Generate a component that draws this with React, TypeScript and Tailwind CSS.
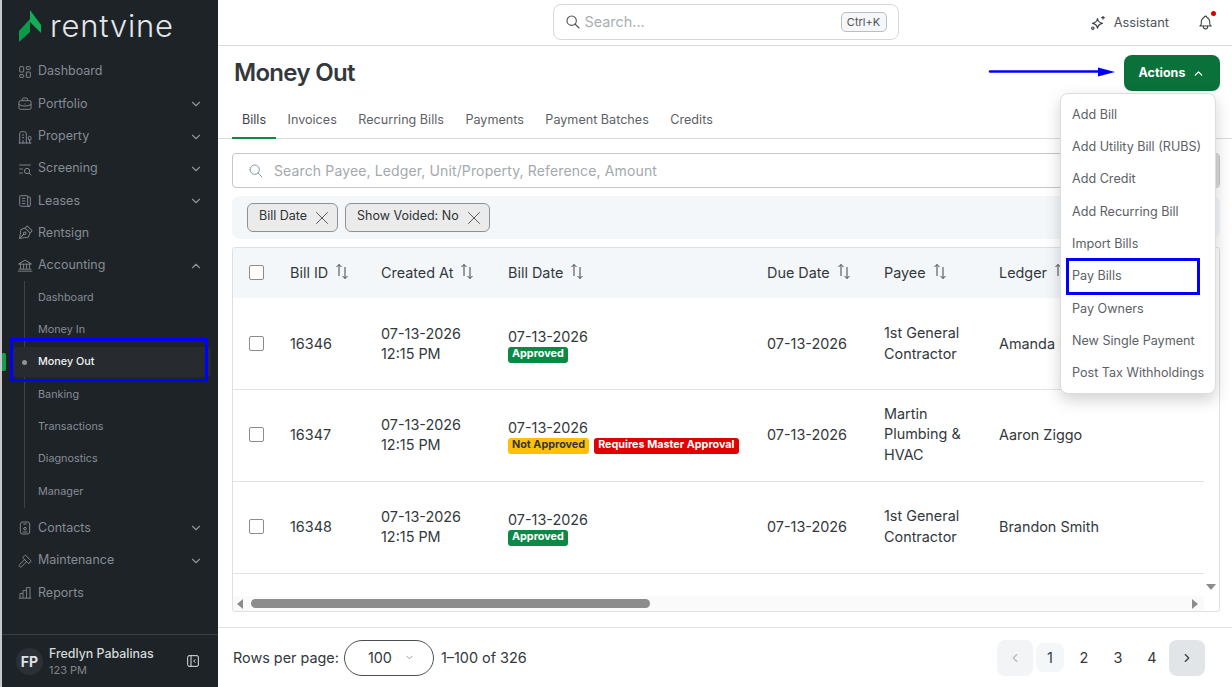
import React from 'react';
import {
  TbBell, TbBriefcase, TbBuildingEstate, TbChevronDown, TbChevronLeft, TbChevronRight, TbChevronUp,
  TbHammer, TbIdBadge, TbLayoutDashboard, TbLayoutSidebarLeftCollapse, TbListSearch, TbNews, TbSearch, TbX,
} from 'react-icons/tb';
import { PiBankLight, PiChartBarLight, PiPenNibLight } from 'react-icons/pi';

const NAV_TOP = [
  { label: 'Dashboard', icon: TbLayoutDashboard },
  { label: 'Portfolio', icon: TbBriefcase, chevron: 'down' },
  { label: 'Property', icon: TbBuildingEstate, chevron: 'down' },
  { label: 'Screening', icon: TbListSearch, chevron: 'down' },
  { label: 'Leases', icon: TbNews, chevron: 'down' },
  { label: 'Rentsign', icon: PiPenNibLight },
  { label: 'Accounting', icon: PiBankLight, chevron: 'up' },
];
const NAV_SUB = ['Dashboard', 'Money In', 'Money Out', 'Banking', 'Transactions', 'Diagnostics', 'Manager'];
const NAV_BOTTOM = [
  { label: 'Contacts', icon: TbIdBadge, chevron: 'down' },
  { label: 'Maintenance', icon: TbHammer, chevron: 'down' },
  { label: 'Reports', icon: PiChartBarLight },
];
const TABS = ['Bills', 'Invoices', 'Recurring Bills', 'Payments', 'Payment Batches', 'Credits'];
const MENU = ['Add Bill', 'Add Utility Bill (RUBS)', 'Add Credit', 'Add Recurring Bill', 'Import Bills', 'Pay Bills', 'Pay Owners', 'New Single Payment', 'Post Tax Withholdings'];
const COLS = 'grid grid-cols-[57px_91px_127px_259px_117px_115px_205px] items-center';

type NavItem = { label: string, icon: React.ComponentType<any>, chevron?: string };

const NavRow = ({ item }: { item: NavItem }) => {
  const Icon = item.icon;
  return (
    <div className="flex h-[32.33px] items-center px-[15px] text-[12.5px] text-[#858c94]">
      <Icon size={16} strokeWidth={1.3} className="text-[#8d9399]" />
      <span className="ml-[5px]">{item.label}</span>
      {item.chevron === 'down' && <TbChevronDown size={14} className="ml-auto text-[#8d9399]" />}
      {item.chevron === 'up' && <TbChevronUp size={14} className="ml-auto text-[#8d9399]" />}
    </div>
  );
};

const Sidebar = () => (
  <aside className="relative flex h-full w-[218px] shrink-0 flex-col border-l-2 border-[#c9c9c9] bg-[#1e2328]">
    <div className="flex h-[55.7px] items-start pl-[17px] pt-[10px]">
      <svg width="24" height="32" viewBox="0 0 24 32">
        <path d="M11 0 L22 15 L22 23 L11 12 Z" fill="#12ad55" />
        <path d="M0 21 L11 9 L11 22 L0 32 Z" fill="#0c9a4b" />
      </svg>
      <span className="ml-[7px] text-[31px] font-light leading-[32px] tracking-[0.8px] text-[#e4e6e8]">rentvine</span>
    </div>
    <nav>
      {NAV_TOP.map((item) => <NavRow key={item.label} item={item} />)}
      <div className="mb-[4.5px] ml-[22px] mt-[-0.5px] border-l border-[#3d4349]">
        {NAV_SUB.map((label) => (
          label === 'Money Out' ? (
            <div key={label} className="my-px -ml-[12px] mr-[7px] flex h-[30.33px] items-center rounded-[3px] bg-[#272b30] pl-[9px] text-[10.8px] font-medium text-[#eef0f2]">
              <span className="h-[5px] w-[5px] rounded-full bg-[#8d9399]" />
              <span className="ml-[11px]">{label}</span>
            </div>
          ) : (
            <div key={label} className="flex h-[32.33px] items-center pl-[13px] text-[10.8px] text-[#858c94]">{label}</div>
          )
        ))}
      </div>
      {NAV_BOTTOM.map((item) => <NavRow key={item.label} item={item} />)}
    </nav>
    <div className="mt-auto flex h-[53px] items-center border-t border-[#3a3f45] pl-[14px] pr-[17px]">
      <div className="flex h-[27px] w-[27px] items-center justify-center rounded-full bg-[#2b3036] text-[14px] font-bold text-[#dfe2e4]">FP</div>
      <div className="ml-[6px] mt-[1px]">
        <div className="text-[12.4px] font-medium leading-[16px] text-[#d5d8da]">Fredlyn Pabalinas</div>
        <div className="mt-[1px] text-[11px] leading-[14px] text-[#7f8589]">123 PM</div>
      </div>
      <TbLayoutSidebarLeftCollapse size={16} strokeWidth={1.5} className="ml-auto text-[#dfe2e4]" />
    </div>
    <div className="absolute left-0 top-[353px] h-[18px] w-[4px] rounded-r-[2px] bg-[#12a150]" />
  </aside>
);

const TopBar = () => (
  <header className="relative flex h-[46px] shrink-0 items-center justify-center border-b border-[#d9dcde]">
    <div className="ml-[1px] mt-[-1px] flex h-[36px] w-[346px] items-center rounded-lg border border-[#d5d9dc] pl-[11px] pr-[11px]">
      <TbSearch size={16} strokeWidth={1.7} className="text-[#4c5256]" />
      <span className="ml-[4px] text-[14.4px] text-[#a9afb3]">Search...</span>
      <span className="ml-auto flex h-[20px] w-[46px] items-center justify-center rounded-[5px] border border-[#b9bec2] bg-[#f6f7f8] text-[11px] text-[#4c5256]">Ctrl+K</span>
    </div>
    <div className="absolute right-[63px] top-[13px] flex items-center text-[12.8px] text-[#4c5256]">
      <svg width="16" height="16" viewBox="0 0 16 16" fill="none" stroke="#3c4145" strokeWidth="1.2" strokeLinejoin="round">
        <path d="M7.5 3.5C8 6.5 9.5 7.8 12.5 8.3C9.5 8.8 8 10.2 7.5 13.2C7 10.2 5.5 8.8 2.5 8.3C5.5 7.8 7 6.5 7.5 3.5Z" />
        <path d="M13 1V4.5M11.2 2.7H14.8" />
        <circle cx="2.8" cy="13.2" r="1.2" />
      </svg>
      <span className="ml-[8px]">Assistant</span>
    </div>
    <div className="absolute right-[18px] top-[14px]">
      <TbBell size={17} strokeWidth={1.5} className="text-[#3c4145]" />
      <span className="absolute right-[-2px] top-[-3px] h-[5px] w-[5px] rounded-full bg-[#d40000]" />
    </div>
  </header>
);

const SortIcon = () => (
  <svg width="14" height="17" viewBox="0 0 14 17" fill="none" stroke="#3e4347" strokeWidth="1" className="ml-[7px] mt-[-1px]">
    <path d="M4 13V1.5M1.5 4L4 1.5L6.5 4M10 4V15.5M7.5 13L10 15.5L12.5 13" />
  </svg>
);

const Badge = ({ color, children }: { color: string, children: React.ReactNode }) => (
  <span className={`${color} inline-flex h-[16px] items-center rounded-[3px] px-[4px] text-[10.8px] font-bold leading-none`}>{children}</span>
);

const Check = () => <span className="ml-[16px] block h-[15px] w-[15px] rounded-[2px] border border-[#8c8c8c] bg-white" />;

const Row = ({ id, payee, ledger, badges, lifted }: { id: string, payee: string[], ledger: string, badges: React.ReactNode, lifted?: boolean }) => (
  <div className={`${COLS} ${lifted ? 'pb-[2px]' : ''} h-[92px] w-[971px] border-b border-[#e2e3e4]`}>
    <Check />
    <div>{id}</div>
    <div className="leading-[20px]">
      <div>07-13-2026</div>
      <div>12:15 PM</div>
    </div>
    <div className="pt-[2px]">
      <div className="leading-[20px]">07-13-2026</div>
      <div className="flex gap-[5px]">{badges}</div>
    </div>
    <div>07-13-2026</div>
    <div className="leading-[20.5px]">{payee.map((line) => <div key={line}>{line}</div>)}</div>
    <div className="whitespace-nowrap">{ledger}</div>
  </div>
);

const Table = () => (
  <div className="mt-[8px] flex h-[365px] shrink-0 flex-col overflow-hidden rounded-[3px] border border-[#dfe0e1] text-[14.4px] text-[#33383c]">
    <div className="flex min-h-0 flex-1">
      <div className="min-w-0 flex-1 overflow-hidden">
        <div className={`${COLS} h-[50px] w-[971px] bg-[#f4f7fa] pb-[1px]`}>
          <Check />
          {['Bill ID', 'Created At', 'Bill Date', 'Due Date', 'Payee', 'Ledger'].map((h) => (
            <div key={h} className="flex items-center">{h}<SortIcon /></div>
          ))}
        </div>
        <Row id="16346" payee={['1st General', 'Contractor']} ledger="Amanda Baker" badges={<Badge color="bg-[#0a8a45] text-white">Approved</Badge>} />
        <Row
          lifted
          id="16347"
          payee={['Martin', 'Plumbing &', 'HVAC']}
          ledger="Aaron Ziggo"
          badges={<>
            <Badge color="bg-[#ffc107] text-[#33383c]">Not Approved</Badge>
            <Badge color="bg-[#e00000] text-white">Requires Master Approval</Badge>
          </>}
        />
        <Row lifted id="16348" payee={['1st General', 'Contractor']} ledger="Brandon Smith" badges={<Badge color="bg-[#0a8a45] text-white">Approved</Badge>} />
      </div>
      <div className="flex w-[15px] shrink-0 flex-col items-center bg-white">
        <div className="mr-[3px] mt-[19px] h-[13px] w-[9px] rounded-[4px] bg-[#8c8c8c]" />
        <svg width="10" height="6" viewBox="0 0 10 6" className="mb-[6px] mr-[2px] mt-auto"><path d="M0 0H10L5 6Z" fill="#8c8c8c" /></svg>
      </div>
    </div>
    <div className="mr-[15px] flex h-[15px] shrink-0 items-center bg-[#fafafa] pl-[4px] pr-[6px]">
      <svg width="6" height="10" viewBox="0 0 6 10"><path d="M6 0V10L0 5Z" fill="#8c8c8c" /></svg>
      <div className="ml-[8px] h-[9px] w-[399px] rounded-full bg-[#8c8c8c]" />
      <svg width="6" height="10" viewBox="0 0 6 10" className="ml-auto"><path d="M0 0V10L6 5Z" fill="#8c8c8c" /></svg>
    </div>
  </div>
);

const Chip = ({ label }: { label: string }) => (
  <div className="flex h-[29px] items-center rounded-md border border-[#8d9195] bg-[#ebebeb] pl-[11px] pr-[4px] text-[12.5px] text-[#2d3236]">
    <span className="mb-[2px]">{label}</span>
    <TbX size={22} strokeWidth={1} className="ml-[4px] text-[#4c5256]" />
  </div>
);

const Footer = () => (
  <footer className="mt-auto flex h-[60px] shrink-0 items-center border-t border-[#dfe0e1] pl-[15px] pr-[27px] text-[14.4px] text-[#33383c]">
    <span>Rows per page:</span>
    <div className="ml-[5px] flex h-[36px] w-[90px] items-center rounded-full border border-[#4a4f53] pl-[23px]">
      <span>100</span>
      <TbChevronDown size={11} className="ml-[12px] text-[#8d9399]" />
    </div>
    <span className="ml-[7px]">1–100 of 326</span>
    <div className="ml-auto flex items-center">
      <div className="flex h-[36px] w-[36px] items-center justify-center rounded-lg bg-[#f2f4f5] text-[#b4b9bc]"><TbChevronLeft size={14} /></div>
      <div className="ml-[3px] flex h-[29px] w-[28px] items-center justify-center rounded-lg bg-[#f4f7fa]">1</div>
      <div className="ml-[3px] flex h-[29px] w-[34px] items-center justify-center">2</div>
      <div className="flex h-[29px] w-[34px] items-center justify-center">3</div>
      <div className="flex h-[29px] w-[34px] items-center justify-center">4</div>
      <div className="flex h-[36px] w-[36px] items-center justify-center rounded-lg bg-[#e2e5e7] text-[#33383c]"><TbChevronRight size={14} /></div>
    </div>
  </footer>
);

const ActionsMenu = () => (
  <div className="absolute left-[842px] top-[93px] w-[156px] rounded-lg border border-[#dcdddf] bg-white pb-[3px] pt-[5px] text-[12.6px] text-[#5c6165] shadow-[0_6px_16px_rgba(0,0,0,0.18)]">
    {MENU.map((m) => (
      <div key={m} className="flex h-[32.33px] items-center whitespace-nowrap pl-[11px]">{m}</div>
    ))}
  </div>
);

export default function App() {
  return (
    <div className="relative flex h-[687px] w-[1232px] overflow-hidden bg-white font-['Inter',sans-serif]">
      <Sidebar />
      <main className="relative flex min-w-0 flex-1 flex-col">
        <TopBar />
        <div className="flex h-[54px] shrink-0 items-start justify-between pl-[16px] pr-[12px]">
          <h1 className="mt-[11px] text-[24px] font-semibold leading-[32px] tracking-[-0.7px] text-[#33383c]">Money Out</h1>
          <button className="mt-[9px] flex h-[36px] w-[96px] items-center justify-center rounded-lg bg-[#0b713a] text-[12.5px] font-bold text-white">
            Actions
            <TbChevronUp size={13} strokeWidth={2.4} className="ml-[7px]" />
          </button>
        </div>
        <div className="flex h-[39px] shrink-0 items-end gap-[1.5px] border-b border-[#d9dcde] pl-[14px]">
          {TABS.map((t, i) => (
            <div key={t} className={`${i === 0 ? 'border-[#0a8a45] text-[#3e4347]' : 'border-transparent text-[#5c6165]'} mb-[-1px] flex h-[39px] items-center border-b-2 px-[10px] pt-[4px] text-[12.6px]`}>{t}</div>
          ))}
        </div>
        <div className="flex min-h-0 flex-col pl-[14px] pr-[12px]">
          <div className="mt-[14px] flex h-[35px] shrink-0 items-center overflow-hidden rounded-[4px] border border-[#c4c7ca] pl-[15px] text-[14px] text-[#a4a9ad]">
            <TbSearch size={16} strokeWidth={1.4} className="text-[#7d8fa3]" />
            <span className="ml-[10px] tracking-[0.13px]">Search Payee, Ledger, Unit/Property, Reference, Amount</span>
            <div className="ml-auto h-full w-[5px] bg-[#d9d9d9]" />
          </div>
          <div className="mt-[8px] flex h-[43px] shrink-0 items-center gap-[7px] rounded-lg bg-[#f4f7fa] pl-[15px]">
            <Chip label="Bill Date" />
            <Chip label="Show Voided: No" />
          </div>
          <Table />
        </div>
        <Footer />
        <ActionsMenu />
        <div className="absolute left-[848px] top-[258px] h-[37px] w-[134px] border-[3px] border-[#0000ff]" />
      </main>
      <div className="absolute left-[10px] top-[338px] h-[44px] w-[198px] border-[3px] border-[#0000ff]" />
      <svg width="130" height="12" viewBox="0 0 130 12" className="absolute left-[988px] top-[66px]">
        <path d="M2 5.5 H112" stroke="#0000ff" strokeWidth="2.4" strokeLinecap="round" fill="none" />
        <path d="M110 1.5 L127 6 L110 10.5 Z" fill="#0000ff" />
      </svg>
    </div>
  );
}
